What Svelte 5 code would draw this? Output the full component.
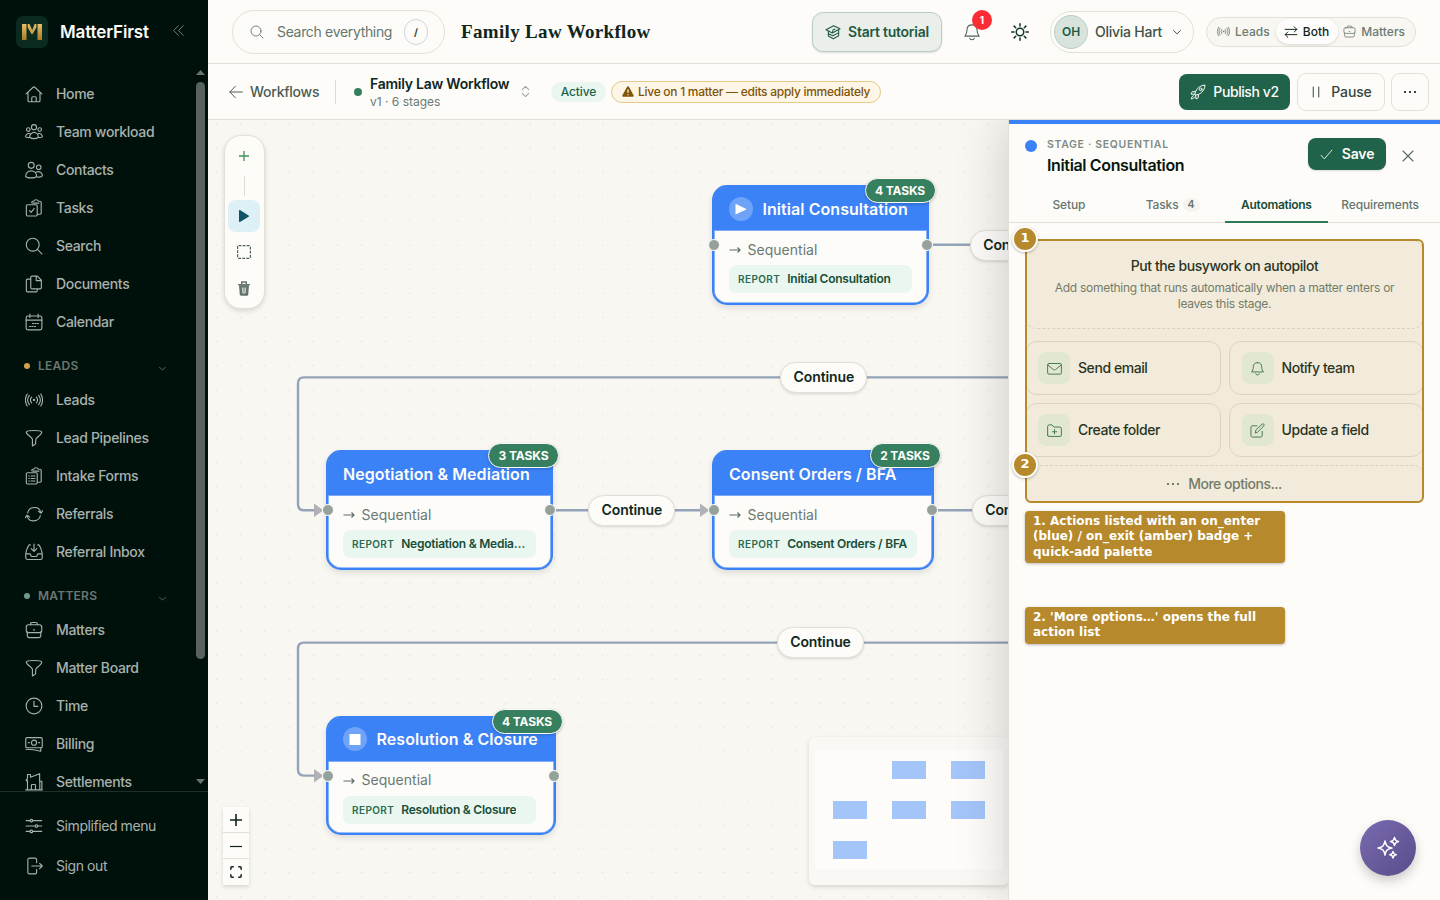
<script>
  const paths = {
    home: '<path d="M1.500 11.800 10.900 3a1.600 1.600 0 0 1 2.200 0l9.400 8.800M4 10v11a1.400 1.400 0 0 0 1.400 1.400h13.200A1.400 1.400 0 0 0 20 21V10M9 22.300v-5.100a1.600 1.600 0 0 1 1.600-1.600h2.800a1.600 1.600 0 0 1 1.600 1.600v5.100"/>',
    team: '<circle cx="12" cy="5.600" r="3.400"/><circle cx="4.400" cy="8.800" r="2.400"/><circle cx="19.600" cy="8.800" r="2.400"/><path d="M6.200 19c0-3.700 2.500-6.500 5.800-6.500s5.800 2.800 5.800 6.500c-2.600 2.400-9 2.400-11.600 0zM6.300 14.200c-3-.8-5.300 1-5.500 4.300 1 .7 2.700 1 4.400.9M17.700 14.200c3-.8 5.300 1 5.500 4.300-1 .7-2.700 1-4.400.9"/>',
    contacts: '<circle cx="8.300" cy="5.800" r="4"/><circle cx="18.300" cy="8.300" r="3"/><path d="M.9 20.500c0-4.300 3-7.300 7.300-7.300s7.300 3 7.300 7.300c-1.400 2.600-13.200 2.600-14.600 0zM14.800 14.700c4.500-1.600 8.300.6 8.400 5-.8 1.600-4.200 2-7.300 1.700"/>',
    tasks: '<path d="M9 5V4.500A1.500 1.500 0 0 1 10.500 3h1.300c.5-2.700 5.400-2.700 5.900 0h2.300A1.600 1.600 0 0 1 21.600 4.600v14.300a1.500 1.500 0 0 1-1.500 1.500h-3.600M10.500 5.500h8"/><rect x="1.800" y="7.600" width="14.500" height="15" rx="1.500"/><path d="m6 15.500 2.200 2.200 4-5"/>',
    search: '<circle cx="10.300" cy="10.300" r="8.600"/><path d="m16.500 16.500 6 6"/>',
    docs: '<path d="M9.200 1.500h7.300l5.300 5.500v10a1.500 1.500 0 0 1-1.500 1.500H9.200A1.500 1.500 0 0 1 7.700 17V3a1.500 1.500 0 0 1 1.500-1.500zM15 1.800v5.700h6.500M7.500 5.500H3.300A1.500 1.500 0 0 0 1.800 7v14a1.500 1.500 0 0 0 1.500 1.500h11.500a1.500 1.500 0 0 0 1.500-1.500v-2.500"/>',
    calendar: '<rect x="1.500" y="4" width="21" height="18.500" rx="2.500"/><path d="M1.500 9.500h21M6.500 1.500V6M17.500 1.500V6"/><path d="M10 14h8M6 18h9" stroke-dasharray="1.500 1.700"/>',
    signal: '<circle cx="12" cy="12" r=".8" fill="currentColor"/><path d="M8.800 8.200a6 6 0 0 0 0 7.600M15.200 8.200a6 6 0 0 1 0 7.600M5.800 5.800c-2.800 3.700-2.800 8.700 0 12.400M18.200 5.800c2.800 3.700 2.800 8.700 0 12.400M3 4c-3 4.800-3 11.200 0 16M21 4c3 4.800 3 11.200 0 16"/>',
    funnel: '<path d="M1.700 4.300c0-3 20.600-3 20.600 0 0 3.600-7 6.700-7.800 9.200-.4 1.200-.2 4.400-.4 6.300l-4.200 2.900V14c0-3.200-8.200-6.200-8.200-9.700z"/>',
    forms: '<path d="M9 5V4.500A1.500 1.500 0 0 1 10.500 3h1.300c.5-2.700 5.400-2.700 5.900 0h2.300A1.600 1.600 0 0 1 21.600 4.600v14.300a1.500 1.500 0 0 1-1.500 1.500h-3.600M10.500 5.500h8"/><rect x="1.800" y="7.600" width="14.500" height="15" rx="1.500"/><path d="M5 12h.7M8 12h5.200M5 15.300h.7M8 15.300h5.200M5 18.600h.7M8 18.600h5.200"/>',
    refer: '<path d="M3.500 10.500C5 3 10.500 3 15 3.500c3.800.5 5.500 3.500 6 7M18 8.300l3.500 2.700 2-3.500M20.500 14c-1.500 7.500-7 7.500-11.500 7-3.800-.5-5.500-3.500-6-7M6.200 16.200 2.700 13.500.5 17"/>',
    inbox: '<path d="M7 2.500H5.500C3.500 4.800 1 12 1 15v4.500A2.500 2.500 0 0 0 3.500 22h17a2.500 2.500 0 0 0 2.500-2.500V15c0-3-2.500-10.200-4.500-12.500H17M1 14.500h5.500c1 0 1.300 3.500 2.800 3.500h5.400c1.500 0 1.800-3.500 2.800-3.500H23M12 1.500v9.300M8.300 7.500l3.700 3.700 3.700-3.700"/>',
    brief: '<path d="M7.500 5V3.700C7.500 2.500 8.300 2 9.500 2h5c1.200 0 2 .5 2 1.700V5"/><rect x="1.700" y="5" width="20.600" height="10.500" rx="3"/><path d="M3 14.500v5.300a2.700 2.700 0 0 0 2.700 2.400h12.600a2.700 2.700 0 0 0 2.700-2.400v-5.300M11.300 11.800h1.400"/>',
    clock: '<circle cx="12" cy="12" r="10.500"/><path d="M12 5.500V12.500h5"/>',
    bill: '<rect x="1" y="3.500" width="22" height="13.500" rx="1.800"/><circle cx="12" cy="10.200" r="3.400"/><path d="M4.500 10.200h1.300M18.200 10.200h1.300M1.500 19c6 0 13 .8 19.500 2.700V17.500"/>',
    house: '<path d="M1 22.500h22M3.300 22V10L2 10.500 1.500 9 3.300 7.800V2h4v3.800L19.500 1v10M20 11h2.500v11M19.700 11v11M8.500 22v-5.500a1.200 1.200 0 0 1 1.200-1.200h3.100a1.200 1.200 0 0 1 1.200 1.200V22"/>',
    sliders: '<path d="M1.500 4.800h5.300M10.200 4.800h12M1.500 12h12M17 12h5.200M1.500 19.200h5.300M10.200 19.200h12"/><circle cx="8.500" cy="4.800" r="1.700"/><circle cx="15.300" cy="12" r="1.700"/><circle cx="8.500" cy="19.200" r="1.700"/>',
    signout: '<path d="M15.500 7.500V3.700A2.200 2.200 0 0 0 13.300 1.500H6a2.200 2.200 0 0 0-2.200 2.200v16.600A2.200 2.200 0 0 0 6 22.500h7.300a2.200 2.200 0 0 0 2.200-2.200v-3.800M9 12h14M19.500 8.500 23 12l-3.500 3.500"/>',
    collapse: '<path d="m12 3-9 9 9 9M21 3l-9 9 9 9"/>',
    chev: '<path d="m4 8.500 8 8 8-8"/>',
    cap: '<path d="M1.500 8.500 13 2.500l9.500 4.700L11 13.500zM5 11v7l7.500 4.200 8-4.500V9M5 14.500l7 3 8-4.200M11 13.500l1-4.500 3-1.500"/>',
    bell: '<path d="M12 2.500c-4.500 0-6.700 3-6.700 6.800 0 4.500-1.300 6-2.800 8.200h19c-1.500-2.200-2.800-3.700-2.800-8.200 0-3.800-2.200-6.800-6.700-6.800zM9 20.500c.6 2.500 5.400 2.500 6 0"/>',
    sun: '<circle cx="12" cy="12" r="5"/><path d="M12 1v3M12 20v3M1 12h3M20 12h3M4.200 4.200l2.100 2.100M17.700 17.700l2.100 2.100M4.200 19.800l2.100-2.100M17.700 6.300l2.100-2.100"/>',
    swap: '<path d="M2 7.500h20M17.500 3 22 7.500 17.500 12M22 16.500H2M6.500 12 2 16.500 6.500 21"/>',
    back: '<path d="M23 12H1.500M11 2 1.500 12l9.500 10"/>',
    updown: '<path d="m5 8 7-7 7 7M5 16l7 7 7-7"/>',
    rocket: '<path d="M7.500 15.500c0-6 5.500-13 15-14-.5 9.500-8 15-14 15zM8 11.500H3.500L1.500 15l5.500.5M12.500 16v4.500L9 22.500 8.500 17M5 17.500c-2 .8-2.500 3-3 5 2-.5 4.200-1 5-3"/><circle cx="16" cy="8" r="2"/>',
    pause: '<path d="M6.500 2v20M17.500 2v20"/>',
    check: '<path d="m2 13.500 6 6.500L22 4"/>',
    close: '<path d="m2 2 20 20M22 2 2 22"/>',
    mail: '<rect x="1" y="4" width="22" height="17" rx="2"/><path d="m1.500 6.500 8.500 7c1.300 1 2.700 1 4 0l8.500-7"/>',
    folder: '<path d="M1 19.500v-14A2.500 2.500 0 0 1 3.500 3H8l3 3.500h9.500A2.500 2.500 0 0 1 23 9v10.500a2 2 0 0 1-2 2H3a2 2 0 0 1-2-2zM12 10.500v7M8.500 14h7"/>',
    edit: '<path d="M11 4.500H4A2.500 2.500 0 0 0 1.500 7v13A2.500 2.500 0 0 0 4 22.500h13a2.500 2.500 0 0 0 2.500-2.500v-6.500M8.500 15.500l1-4.500L19.500 1.800c2-1.300 4 .7 2.700 2.700L12.500 14.500z"/>',
    spark: '<path d="M9 5c.8 4.600 2.400 6.200 7 7-4.600.8-6.200 2.400-7 7-.8-4.600-2.400-6.200-7-7 4.600-.8 6.200-2.400 7-7zM18.500 1.500c.4 2.500 1.500 3.600 4 4-2.500.4-3.600 1.500-4 4-.4-2.500-1.500-3.600-4-4 2.500-.4 3.600-1.500 4-4zM17 15.500c.3 2 1.200 2.900 3.200 3.200-2 .3-2.900 1.200-3.200 3.200-.3-2-1.200-2.900-3.200-3.200 2-.3 2.900-1.200 3.200-3.200z"/>'
  };

  const top = [['home', 'Home'], ['team', 'Team workload'], ['contacts', 'Contacts'], ['tasks', 'Tasks'], ['search', 'Search'], ['docs', 'Documents'], ['calendar', 'Calendar']];
  const leads = [['signal', 'Leads'], ['funnel', 'Lead Pipelines'], ['forms', 'Intake Forms'], ['refer', 'Referrals'], ['inbox', 'Referral Inbox']];
  const matters = [['brief', 'Matters'], ['funnel', 'Matter Board'], ['clock', 'Time'], ['bill', 'Billing'], ['house', 'Settlements']];

  const nodes = [
    { x: 504, y: 65, w: 217, name: 'Initial Consultation', tasks: 4, glyph: 'play', pill: 183 },
    { x: 118, y: 330.3, w: 226.5, name: 'Negotiation & Mediation', tasks: 3, pill: 193 },
    { x: 504, y: 330.3, w: 222, name: 'Consent Orders / BFA', tasks: 2, pill: 188 },
    { x: 118, y: 595.6, w: 230, name: 'Resolution & Closure', tasks: 4, glyph: 'stop', pill: 193 }
  ];
  const labels = [[762, 109.5], [572.4, 242], [380.4, 375], [764, 375], [569, 507.4]];
  const mini = [[83, 25], [142, 25], [24, 65], [83, 65], [142, 65], [24, 105]];
  const actions = [['mail', 'Send email'], ['bell', 'Notify team'], ['folder', 'Create folder'], ['edit', 'Update a field']];
</script>

{#snippet icon(name, size = 18, sw = 1.5)}
  <svg width={size} height={size} viewBox="0 0 24 24" fill="none" stroke="currentColor" stroke-width={sw} stroke-linecap="round" stroke-linejoin="round">{@html paths[name]}</svg>
{/snippet}

{#snippet items(list)}
  {#each list as [i, t]}
    <a class="item">{@render icon(i)}<span>{t}</span></a>
  {/each}
{/snippet}

<div class="app">
  <aside>
    <div class="brand">
      <div class="logo">
        <svg width="20" height="16" viewBox="0 0 20 16">
          <defs><linearGradient id="gold" x1="0" y1="0" x2="0" y2="1"><stop offset="0" stop-color="#e6bf68" /><stop offset="1" stop-color="#a87b27" /></linearGradient></defs>
          <path d="M0 0h4.500v16H0zM15.500 0H20v16h-4.500zM5.700 0h1.700L10.200 6 12.700 0h1.700v3.500L10.600 10.300h-1L5.700 3.500z" fill="url(#gold)" />
        </svg>
      </div>
      <strong>MatterFirst</strong>
      <span class="collapse">{@render icon('collapse', 13, 1.8)}</span>
    </div>
    <div class="scroll">
      <nav>
        {@render items(top)}
        <div class="group"><i class="gold"></i><span>LEADS</span>{@render icon('chev', 9, 2.4)}</div>
        {@render items(leads)}
        <div class="group"><i class="sage"></i><span>MATTERS</span>{@render icon('chev', 9, 2.4)}</div>
        {@render items(matters)}
      </nav>
      <div class="bar">
        <svg width="9" height="5"><path d="M0 5 4.500 0 9 5z" fill="#6b756f" /></svg>
        <div class="thumb"></div>
        <svg class="down" width="9" height="5"><path d="M0 0h9L4.500 5z" fill="#6b756f" /></svg>
      </div>
    </div>
    <div class="foot">
      <a class="item light">{@render icon('sliders')}<span>Simplified menu</span></a>
      <a class="item light">{@render icon('signout')}<span>Sign out</span></a>
    </div>
  </aside>

  <div class="main">
    <header>
      <div class="searchbox">{@render icon('search', 14, 1.5)}<span>Search everything</span><kbd>/</kbd></div>
      <h1>Family Law Workflow</h1>
      <div class="grow"></div>
      <button class="tutorial">{@render icon('cap', 16, 1.6)}<span>Start tutorial</span></button>
      <div class="bell">{@render icon('bell', 18, 1.4)}<em>1</em></div>
      <div class="sun">{@render icon('sun', 18, 2)}</div>
      <div class="user"><b>OH</b><span>Olivia Hart</span>{@render icon('chev', 10, 2.4)}</div>
      <div class="toggle">
        <span>{@render icon('signal', 13, 1.5)}<u>Leads</u></span>
        <span class="on">{@render icon('swap', 14, 1.7)}<u>Both</u></span>
        <span>{@render icon('brief', 13, 1.5)}<u>Matters</u></span>
      </div>
    </header>

    <div class="sub">
      <span class="backlink">{@render icon('back', 14, 1.7)}<span>Workflows</span></span>
      <span class="rule"></span>
      <i class="status"></i>
      <div class="flow"><strong>Family Law Workflow</strong><small>v1 · 6 stages</small></div>
      <span class="updown">{@render icon('updown', 11, 2.2)}</span>
      <span class="active">Active</span>
      <span class="live">
        <svg width="12" height="11" viewBox="0 0 12 11"><path d="M6 .3c.4 0 .7.2.9.5l4.700 8.400c.4.700 0 1.500-.8 1.500H1.200c-.8 0-1.200-.8-.8-1.500L5.100.8c.2-.3.500-.5.900-.5z" fill="#805407" /><path d="M6 3.500v3.200M6 8.200v1" stroke="#fdf4e0" stroke-width="1.300" /></svg>
        <span>Live on 1 matter — edits apply immediately</span>
      </span>
      <div class="grow"></div>
      <button class="publish">{@render icon('rocket', 16, 1.5)}<span>Publish v2</span></button>
      <button class="pause">{@render icon('pause', 12, 2)}<span>Pause</span></button>
      <button class="more"><s></s><s></s><s></s></button>
    </div>

    <div class="canvas">
      <svg class="edges" width="1232" height="780" fill="none">
        <defs>
          <pattern id="dots" x="-3.4" y="-7.6" width="24.13" height="24.13" patternUnits="userSpaceOnUse"><circle cx="12.07" cy="12.07" r=".75" fill="#dfdfd7" /></pattern>
        </defs>
        <rect width="1232" height="780" fill="url(#dots)" />
        <path d="M724 124.700H800M800 257.400H96q-6 0-6 6V384.300q0 6 6 6h12M348 390.300H496M729 390.300H800M800 522.600H96q-6 0-6 6V649.600q0 6 6 6h12" stroke="#94a3b8" stroke-width="2.4" />
        <path d="M106 383.500v13.500l9.500-6.700zM492 383.500v13.500l9.500-6.700zM106 648.900v13.500l9.500-6.700z" fill="#b1b1b7" />
      </svg>

      {#each labels as [x, y]}
        <div class="edge-label" style:left="{x}px" style:top="{y}px"><span>Continue</span></div>
      {/each}

      {#each nodes as n}
        <div class="node" style:left="{n.x}px" style:top="{n.y}px" style:width="{n.w}px">
          <div class="node-head">
            {#if n.glyph}
              <span class="disc">
                <svg width="12" height="12" viewBox="0 0 12 12" fill="#fff">{#if n.glyph === 'play'}<path d="M.5.8 11.800 6.200.5 11.600z" />{:else}<path d="M.5 1h11v11H.5z" />{/if}</svg>
              </span>
            {/if}
            <span>{n.name}</span>
          </div>
          <div class="node-body">
            <div class="kind">
              <svg width="12" height="8" viewBox="0 0 12 8" fill="none" stroke="#5d6d66" stroke-width="1.2"><path d="M.5 4h10.500M8.500 1.500 11 4 8.500 6.500" /></svg>
              <span>Sequential</span>
            </div>
            <div class="report" style:width="{n.pill}px"><b>REPORT</b><span>{n.name}</span></div>
          </div>
          <span class="badge">{n.tasks} TASKS</span>
          <i class="handle l"></i><i class="handle r"></i>
        </div>
      {/each}

      <div class="tools">
        <span class="tool"><svg width="12" height="12" viewBox="0 0 12 12"><path d="M6 1v10M1 6h10" stroke="#3f9160" stroke-width="1.3" /></svg></span>
        <span class="tick"></span>
        <span class="tool sel"><svg width="12" height="14" viewBox="0 0 12 14"><path d="M1 1.700v10.600c0 .6.500.9 1 .6l8.600-5.200c.5-.3.500-1 0-1.300L2 1.100c-.5-.3-1 0-1 .6z" fill="#135366" /></svg></span>
        <span class="tool"><svg width="14" height="14" viewBox="0 0 14 14"><rect x=".6" y=".6" width="12.800" height="12.800" rx="1" fill="none" stroke="#4c5f57" stroke-width="1.2" stroke-dasharray="2.8 1.3" /></svg></span>
        <span class="tool"><svg width="12" height="15" viewBox="0 0 12 15"><path d="M.3 3.700h11.400M3.700 3V1h4.600v2" stroke="#63736c" stroke-width="1.4" fill="none" /><path d="M1 4.300h10l-.8 9.500c0 .5-.4.9-1 .9H2.800c-.6 0-1-.4-1-.9z" fill="#63736c" /><path d="M4.300 6.500l.4 5.500h2.600l.4-5.500" stroke="#c8cdc9" stroke-width="1" fill="#a1aaa5" /></svg></span>
      </div>

      <div class="zoomer">
        <span><svg width="12" height="12"><path d="M6 0v12M0 6h12" stroke="#10231c" stroke-width="1.6" /></svg></span>
        <span><svg width="12" height="12"><path d="M0 6.500h12" stroke="#10231c" stroke-width="1.2" /></svg></span>
        <span><svg width="12" height="12" fill="none" stroke="#10231c" stroke-width="1.5"><path d="M.8 3.800V2Q.8.800 2 .800H3.800M8.200.8H10q1.200 0 1.200 1.200V3.800M11.200 8.200V10q0 1.200-1.200 1.200H8.200M3.800 11.200H2Q.8 11.200.8 10V8.200" /></svg></span>
      </div>

      <div class="minimap"><div class="view"></div>
        {#each mini as [x, y]}<i style:left="{x}px" style:top="{y}px"></i>{/each}
      </div>

      <section class="panel">
        <div class="phead">
          <i></i>
          <div class="ptitle"><small>STAGE · SEQUENTIAL</small><strong>Initial Consultation</strong></div>
          <button class="save">{@render icon('check', 13, 1.6)}<span>Save</span></button>
          <span class="x">{@render icon('close', 12, 2.2)}</span>
        </div>
        <div class="tabs">
          <span>Setup</span><span>Tasks <em>4</em></span><span class="cur">Automations</span><span>Requirements</span>
        </div>
        <div class="content">
          <div class="intro">
            <strong>Put the busywork on autopilot</strong>
            <p>Add something that runs automatically when a matter enters or<br />leaves this stage.</p>
          </div>
          <div class="grid">
            {#each actions as [i, t]}
              <div class="card"><span class="tile">{@render icon(i, 15, 1.5)}</span><b>{t}</b></div>
            {/each}
          </div>
          <div class="options"><span class="dots"><s></s><s></s><s></s></span><span>More options...</span></div>
          <div class="frame"></div>
          <span class="num">1</span><span class="num two">2</span>
        </div>
        <div class="note">1. Actions listed with an on_enter (blue) / on_exit (amber) badge + quick-add palette</div>
        <div class="note next">2. 'More options…' opens the full action list</div>
      </section>
      <div class="fab">{@render icon('spark', 24, 1.5)}</div>
    </div>
  </div>
</div>

<style>
  :global(body) { overflow: hidden; }
  * { box-sizing: border-box; }
  .app { width: 1440px; height: 900px; display: flex; overflow: hidden; font-family: Inter, 'Liberation Sans', sans-serif; font-size: 14px; color: #0f261d; background: #fdfcf9; }
  svg { display: block; flex: none; }
  span, strong, b, small, u { white-space: nowrap; }
  u { text-decoration: none; }
  i, em { font-style: normal; }
  button { font: inherit; padding: 0; border: 0; display: flex; align-items: center; justify-content: center; }
  .grow { flex: 1; }

  aside { width: 208px; flex: none; display: flex; flex-direction: column; background: #00110c; color: #a9b1ac; }
  .brand { height: 68px; flex: none; display: flex; align-items: center; padding: 0 23px 4px 16px; color: #fdfcf9; }
  .logo { width: 32px; height: 32px; border-radius: 7px; background: #0b2a20; display: flex; align-items: center; justify-content: center; }
  .brand strong { font-size: 17px; font-weight: 600; margin-left: 12px; letter-spacing: -.13px; flex: 1; }
  .collapse { color: #727d77; margin-top: -4px; }
  .scroll { height: 723px; flex: none; display: flex; overflow: hidden; }
  nav { width: 196px; padding-top: 7px; }
  .item { height: 38px; display: flex; align-items: center; gap: 13px; padding-left: 25px; font-weight: 500; letter-spacing: -.33px; }
  .item span { margin-bottom: 2px; }
  .item.light { font-weight: 400; height: 40px; letter-spacing: -.42px; }
  .group { display: flex; align-items: center; height: 26px; margin: 12px 29px 2px 24px; color: #6c7771; font-size: 12px; font-weight: 600; letter-spacing: .25px; }
  .group span { flex: 1; margin: 0 0 2px 8px; }
  .group i { width: 6px; height: 6px; border-radius: 50%; }
  .group :global(svg) { margin-top: 4px; color: #5f6b65; }
  .gold { background: #d3a24a; }
  .sage { background: #6f9b87; }
  .bar { width: 9px; display: flex; flex-direction: column; align-items: center; padding: 2px 0 7px; }
  .down { margin-top: auto; }
  .thumb { width: 9px; height: 577px; margin-top: 7px; border-radius: 5px; background: #59635e; }
  .foot { flex: 1; border-top: 1px solid #1d2f28; padding-top: 14px; }

  .main { flex: 1; display: flex; flex-direction: column; min-width: 0; }
  header { height: 64px; flex: none; display: flex; align-items: center; padding: 0 24px; border-bottom: 1px solid #e2e1d8; }
  .searchbox { width: 213px; height: 44px; border: 1px solid #e2e1d8; border-radius: 22px; display: flex; align-items: center; padding: 0 16px 0 17px; color: #66766f; }
  .searchbox span { margin-left: 13px; flex: 1; letter-spacing: -.33px; }
  kbd { width: 24px; height: 26px; border: 1px solid #cfd5e2; border-radius: 13px; font: 700 10px Inter, sans-serif; color: #33473e; display: flex; align-items: center; justify-content: center; }
  h1 { margin: 1px 0 0 16px; font: 700 19px 'Liberation Serif', serif; letter-spacing: .33px; color: #0f261d; white-space: nowrap; }
  .tutorial { width: 130px; height: 40px; border: 1px solid #b9cfc4; border-radius: 11px; background: #eaefea; gap: 7px; font-weight: 600; color: #1f5a43; box-shadow: 0 1px 2px #0002; letter-spacing: -.25px; }
  .bell { position: relative; margin-left: 21px; color: #4d6057; }
  .bell em { position: absolute; left: 9px; top: -13px; width: 20px; height: 20px; border-radius: 50%; background: #fb2c36; color: #fff; font-size: 10px; font-weight: 700; display: flex; align-items: center; justify-content: center; }
  .sun { margin-left: 30px; color: #0f3526; }
  .user { margin-left: 21px; width: 144px; height: 42px; border: 1px solid #e2e1d8; border-radius: 21px; display: flex; align-items: center; padding-left: 3px; color: #3f5249; font-weight: 500; }
  .user b { width: 34px; height: 34px; border-radius: 50%; border: 1px solid #b9cfc4; background: #d8e3dc; color: #1f5a43; font-size: 12px; font-weight: 600; display: flex; align-items: center; justify-content: center; }
  .user span { margin: 0 10px 0 7px; letter-spacing: -.25px; }
  .toggle { margin-left: 12px; width: 210px; height: 30px; border: 1px solid #e2e1d8; border-radius: 15px; background: #f8f7f2; display: flex; align-items: center; padding: 0 10px; color: #6b7a73; font-size: 12px; font-weight: 500; justify-content: space-between; }
  .toggle span { display: flex; align-items: center; gap: 5px; }
  .toggle .on { background: #fefdfb; width: 62px; height: 25px; border-radius: 13px; justify-content: center; color: #0f261d; box-shadow: 0 1px 3px #0002; }

  .sub { height: 56px; flex: none; display: flex; align-items: center; padding: 0 11px 0 20px; border-bottom: 1px solid #e2e1d8; }
  .backlink { display: flex; align-items: center; gap: 7px; color: #4b5d55; font-weight: 500; width: 107px; padding-left: 1px; letter-spacing: -.25px; }
  .rule { width: 1px; height: 24px; background: #dddcd2; }
  .status { width: 8px; height: 8px; border-radius: 50%; background: #37805f; margin: 0 8px 0 18px; }
  .flow { display: flex; flex-direction: column; width: 150px; padding-top: 2px; }
  .flow strong { font-weight: 600; line-height: 18px; letter-spacing: -.25px; }
  .flow small { font-size: 12px; line-height: 17px; color: #697972; letter-spacing: 0; }
  .updown { color: #9aa5a0; margin-right: 20px; }
  .active { height: 20px; width: 55px; border-radius: 10px; background: #e9f7f0; color: #1f6447; font-size: 12px; font-weight: 500; line-height: 20px; text-align: center; letter-spacing: -.1px; }
  .live { margin-left: 5px; width: 270px; height: 22px; border: 1px solid #e6c88d; border-radius: 11px; background: #fdf6e7; color: #805407; font-size: 12px; font-weight: 500; display: flex; align-items: center; padding-left: 10px; gap: 4px; letter-spacing: -.27px; }
  .publish { width: 111px; height: 36px; border-radius: 8px; background: #20634a; color: #fdfcf9; gap: 7px; font-weight: 500; letter-spacing: -.42px; }
  .pause { width: 88px; height: 38px; border-radius: 9px; border: 1px solid #e2e1d8; background: #fdfcf9; margin: 0 6px 0 7px; gap: 9px; color: #33473e; font-weight: 500; letter-spacing: -.15px; }
  .more { width: 38px; height: 38px; border-radius: 9px; border: 1px solid #e2e1d8; background: #fdfcf9; gap: 3px; color: #33473e; }
  s { width: 2px; height: 2px; background: currentColor; }

  .canvas { position: relative; flex: 1; background: #f8f7f2; overflow: hidden; }
  .edges { position: absolute; left: 0; top: 0; }
  .edge-label { position: absolute; width: 87px; height: 31px; border: 1px solid #e2e1d8; border-radius: 16px; background: #fdfcf9; font-weight: 600; display: flex; align-items: center; justify-content: center; box-shadow: 0 1px 3px #0002; letter-spacing: -.1px; padding-bottom: 2px; }
  .node { position: absolute; height: 119.5px; border: 2px solid #3b82f6; border-radius: 15px; background: #fdfcf9; box-shadow: inset 0 0 0 .6px #3b82f6, 0 3px 6px #0000001c; }
  .node-head { height: 44px; background: #3b82f6; border-radius: 12px 12px 0 0; display: flex; align-items: center; padding-left: 15px; font-size: 16px; font-weight: 600; color: #fdfcf9; border-bottom: 1px solid #7babf8; letter-spacing: .06px; }
  .disc { width: 24px; height: 24px; border-radius: 50%; background: #6ea3f8; margin-right: 9.5px; display: flex; align-items: center; justify-content: center; }
  .node-body { padding: 8px 14.5px; }
  .kind { display: flex; align-items: center; gap: 7px; height: 22px; color: #697972; letter-spacing: .02px; }
  .kind span { margin-bottom: 1.500px; }
  .report { height: 28px; margin-top: 4px; border-radius: 7px; background: #e9f7f0; display: flex; align-items: center; padding: 0 8px 1px 9.5px; color: #174d38; font-size: 12px; font-weight: 600; letter-spacing: -.24px; }
  .report b { font-size: 10px; font-weight: 600; letter-spacing: .4px; margin: 1px 7px 0 0; color: #2a6a50; }
  .report span { overflow: hidden; text-overflow: ellipsis; }
  .badge { position: absolute; right: -8.5px; top: -9px; width: 71px; height: 25px; border: 1.5px solid #fdfcf9; border-radius: 13px; background: #37805f; color: #fdfcf9; font-size: 12px; font-weight: 700; display: flex; align-items: center; justify-content: center; box-shadow: 0 1px 3px #0003; letter-spacing: -.1px; }
  .handle { position: absolute; top: 52.2px; width: 12px; height: 12px; border-radius: 50%; background: #96a19b; border: 1.3px solid #fdfcf9; }
  .handle.l { left: -5.8px; }
  .handle.r { right: -5.5px; }

  .tools { position: absolute; left: 15.5px; top: 15px; width: 41px; height: 174px; border: 1px solid #e2e1d8; border-radius: 17px; background: #fdfcf9; box-shadow: 0 2px 5px #0002; display: flex; flex-direction: column; align-items: center; padding-top: 4px; }
  .tool { width: 32px; height: 32px; margin-bottom: 4px; border-radius: 8px; display: flex; align-items: center; justify-content: center; }
  .tool.sel { background: #dcf0f6; }
  .tick { width: 1px; height: 20px; background: #dddcd0; margin-bottom: 4px; }
  .zoomer { position: absolute; left: 15px; top: 687px; width: 26px; box-shadow: 0 2px 4px #0002; background: #fdfcf9; }
  .zoomer span { height: 26px; display: flex; align-items: center; justify-content: center; border-bottom: 1px solid #e2e1d8; }
  .zoomer span:last-child { border: 0; }
  .minimap { position: absolute; left: 601px; top: 617px; width: 200px; height: 148px; border-radius: 6px; background: #faf8f4; box-shadow: 0 2px 5px #0002; }
  .view { margin: 13px 6px; height: 119px; background: #fdfcf9; }
  .minimap i { position: absolute; width: 34.4px; height: 18px; background: #a4c5fa; margin-top: -1px; }

  .panel { position: absolute; left: 800px; top: 0; width: 432px; height: 780px; background: #fdfcf9; border-left: 1px solid #e2e1d8; box-shadow: 0 0 50px #00000030; display: flex; flex-direction: column; }
  .phead { border-top: 4px solid #3b82f6; height: 68px; flex: none; display: flex; align-items: flex-start; padding: 14px 26px 0 16px; }
  .phead i { width: 12px; height: 12px; border-radius: 50%; background: #3b82f6; margin: 2px 10px 0 0; }
  .ptitle { flex: 1; display: flex; flex-direction: column; }
  .ptitle small { font-size: 10.5px; line-height: 14px; font-weight: 600; letter-spacing: .67px; color: #7e8b85; }
  .ptitle strong { font-size: 16px; font-weight: 600; line-height: 27px; letter-spacing: -.35px; color: #07170f; }
  .save { width: 78px; height: 32px; border-radius: 8px; background: #20634a; color: #fdfcf9; font-weight: 600; gap: 9px; box-shadow: 0 1px 2px #0002; letter-spacing: -.15px; }
  .save span { margin-bottom: 1px; }
  .x { margin: 12px 0 0 16px; color: #56675f; }
  .tabs { height: 35px; flex: none; display: flex; padding: 0 8px; border-bottom: 1px solid #e2e1d8; font-size: 12px; font-weight: 500; color: #66766f; }
  .tabs span { flex: 1; display: flex; align-items: center; justify-content: center; padding-bottom: 1px; letter-spacing: -.13px; }
  .tabs .cur { color: #174d38; border-bottom: 2px solid #2a7a58; margin-bottom: -1px; padding: 0; font-weight: 600; letter-spacing: -.3px; }
  .tabs em { margin-left: 4px; width: 17px; height: 14px; border-radius: 7px; background: #f5f4ef; font-size: 10.5px; font-weight: 600; line-height: 14px; text-align: center; }
  .content { position: relative; margin: 17px 16px 0; height: 263px; flex: none; }
  .intro { height: 89px; border: 1px dashed #dfdfd6; border-radius: 12px; text-align: center; padding-top: 15px; }
  .intro strong { font-weight: 500; line-height: 20px; letter-spacing: -.42px; }
  .intro p { margin: 4px 0 0; font-size: 12px; line-height: 16px; color: #697972; letter-spacing: -.27px; white-space: nowrap; }
  .grid { display: grid; grid-template-columns: 1fr 1fr; gap: 8px; margin-top: 12px; }
  .card { height: 54px; border: 1px solid #e2e1d8; border-radius: 12px; display: flex; align-items: center; padding-left: 12px; }
  .card b { font-weight: 500; letter-spacing: -.43px; margin-bottom: 2px; }
  .tile { width: 32px; height: 32px; border-radius: 8px; background: #e9f7f0; color: #2d7253; margin-right: 8px; display: flex; align-items: center; justify-content: center; }
  .options { margin-top: 8px; height: 38px; border: 1px dashed #dfdfd6; border-radius: 10px; display: flex; align-items: center; justify-content: center; color: #697972; font-weight: 500; letter-spacing: -.48px; padding-bottom: 1px; }
  .dots { display: flex; gap: 3px; margin-right: 9px; }
  .frame { position: absolute; inset: -1px 0 0 0; border: 2px solid #b68a2c; border-radius: 6px; background: rgba(182, 138, 44, .15); }
  .num { position: absolute; left: -13px; top: -14px; width: 26px; height: 26px; border-radius: 50%; border: 2px solid #fdfcf9; background: #b68a2c; color: #fff; font: 700 13px/20px 'DejaVu Sans', sans-serif; text-align: center; box-shadow: 0 1px 3px #0004; }
  .num.two { top: 212px; }
  .note { margin: 8px 0 0 16px; width: 260px; padding: 2.8px 8px; border-radius: 4px; background: #b68a2c; color: #fff; font: 700 12px/15.6px 'DejaVu Sans', sans-serif; box-shadow: 0 1px 3px #0004; }
  .note.next { margin-top: 43.6px; }
  .fab { position: absolute; left: 1152px; top: 700px; width: 56px; height: 56px; border-radius: 50%; background: linear-gradient(135deg, #7a6ab0, #5a4c8a); color: #fff; display: flex; align-items: center; justify-content: center; box-shadow: 0 5px 12px #0003; }
</style>
